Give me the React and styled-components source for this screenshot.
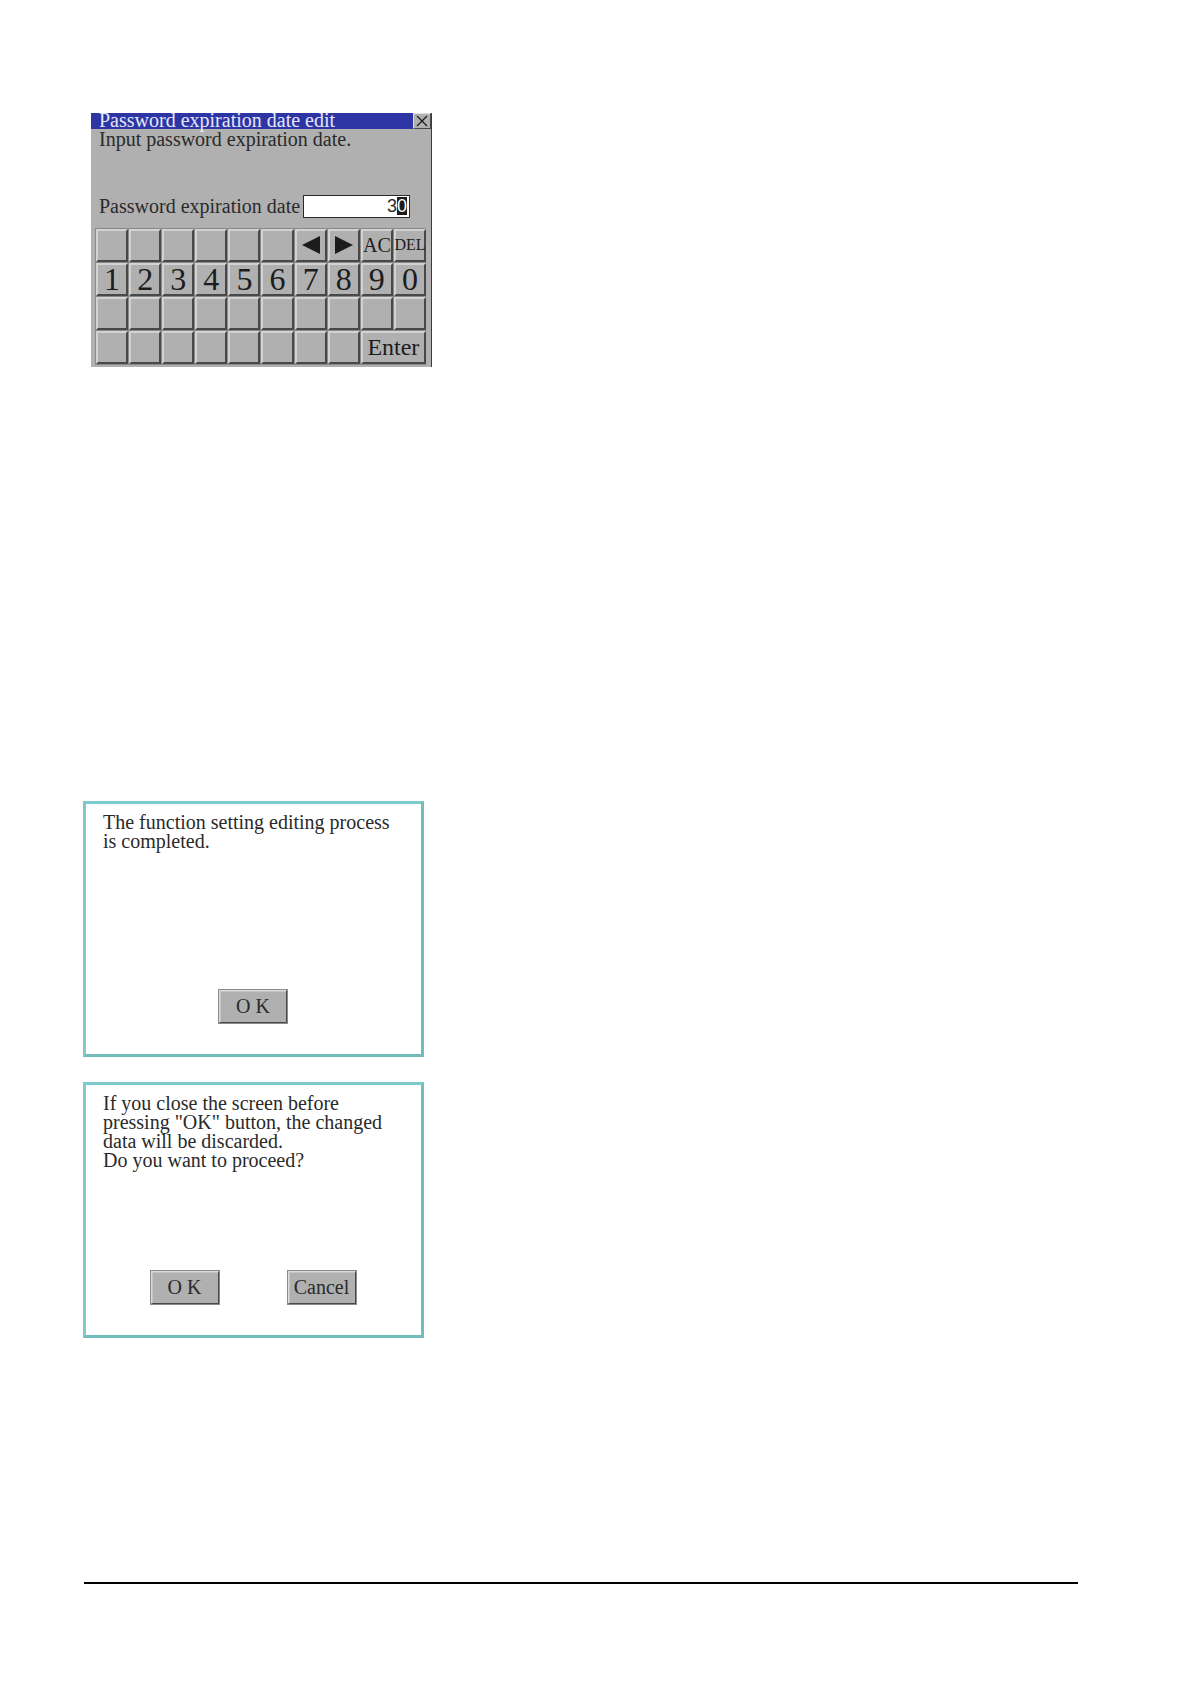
import { useState } from "react";
import styled, { createGlobalStyle } from "styled-components";

const GlobalStyle = createGlobalStyle`
  * {
    box-sizing: border-box;
  }

  body {
    margin: 0;
    background: #fff;
    color: #2a2a2a;
    font-family: "Liberation Serif", "Times New Roman", serif;
    font-size: 20px;
  }

  button,
  input {
    font: inherit;
    color: inherit;
    border-radius: 0;
  }
`;

const Page = styled.main`
  min-height: 100vh;
  padding: 113px 112px 100px 83px;
  display: flex;
  flex-direction: column;
`;

const Panel = styled.section`
  width: 341px;
  margin-left: 8px;
  margin-bottom: 434px;
  background: #b0b0b0;
  border-right: 1px solid #3c3c3c;
`;

const TitleBar = styled.header`
  display: flex;
  justify-content: space-between;
  height: 16px;
  background: #2d35a5;
`;

const Title = styled.h1`
  margin: 0;
  padding-left: 8px;
  font-size: 20px;
  font-weight: 400;
  line-height: 14px;
  color: #e4e6fa;
`;

const CloseButton = styled.button`
  display: flex;
  align-items: center;
  justify-content: center;
  width: 18px;
  height: 16px;
  padding: 0;
  background: #b0b0b0;
  border: 1px solid;
  border-color: #e0e0e0 #484848 #484848 #e0e0e0;
`;

const Hint = styled.p`
  margin: 0;
  padding-left: 8px;
  line-height: 20px;
`;

const Field = styled.div`
  display: flex;
  align-items: center;
  height: 24px;
  margin: 45px 21px 10px 8px;
`;

const FieldLabel = styled.label`
  flex: 0 0 204px;
  white-space: nowrap;
`;

const ValueBox = styled.div`
  flex: 1;
  min-width: 0;
  display: flex;
  align-items: center;
  height: 23px;
  padding-right: 2px;
  background: #fff;
  border: 1px solid #2a2a2a;
  font-family: "Liberation Sans", Arial, sans-serif;
  font-size: 18px;
  line-height: 18px;
`;

const ValueInput = styled.input`
  flex: 1;
  min-width: 0;
  padding: 0;
  border: 0;
  outline: 0;
  background: transparent;
  text-align: right;
`;

const Cursor = styled.span`
  background: #1c1c1c;
  color: #fff;
`;

const Keypad = styled.div`
  display: grid;
  grid-template-columns: repeat(10, 1fr);
  grid-auto-rows: 33px;
  gap: 1px;
  margin: 0 5px 0 4px;
  padding: 1px 0 1px 1px;
  background: #8a8a8a;
`;

const Key = styled.button`
  grid-column: span ${({ $span }) => $span || 1};
  display: flex;
  align-items: center;
  justify-content: center;
  min-width: 0;
  padding: 0 0 2px;
  background: #b0b0b0;
  border: 2px solid;
  border-color: #d2d2d2 #484848 #484848 #d2d2d2;
  color: #1c1c1c;
  font-size: ${({ $size }) => $size || 32}px;
  line-height: 26px;
`;

const PanelFoot = styled.div`
  height: 2px;
`;

const Dialog = styled.section`
  display: flex;
  flex-direction: column;
  justify-content: space-between;
  width: 341px;
  min-height: 256px;
  padding: 9px 9px 30px 17px;
  border: 3px solid #7ccaca;
  border-right-color: #74bcbc;
  border-bottom-color: #74bcbc;

  & + & {
    margin-top: 25px;
  }
`;

const Message = styled.p`
  margin: 0;
  line-height: 19px;
  white-space: pre-line;
`;

const Actions = styled.div`
  display: flex;
  justify-content: center;
  gap: 67px;
  padding-right: 9px;
`;

const ActionButton = styled.button`
  width: 70px;
  height: 35px;
  padding: 0;
  background: #b0b0b0;
  border: 2px solid;
  border-color: #dcdcdc #484848 #484848 #dcdcdc;
  box-shadow: inset 1px 1px #c4c4c4;
  outline: 1px solid #8a8a8a;
  outline-offset: -1px;
`;

const Rule = styled.hr`
  width: calc(100% - 1px);
  margin: auto 0 0 1px;
  border: 0;
  border-top: 2px solid #000;
`;

const Arrow = ({ left }) => (
  <svg width="18" height="18" viewBox="0 0 18 18" aria-hidden="true">
    <path d={left ? "M18 0v18L0 9z" : "M0 0v18l18-9z"} fill="#1c1c1c" />
  </svg>
);

const blanks = (row, count) =>
  Array.from({ length: count }, (_, i) => ({ id: `${row}-${i}` }));

const keys = [
  ...blanks("top", 6),
  { id: "left", label: "Move left", content: <Arrow left /> },
  { id: "right", label: "Move right", content: <Arrow /> },
  { id: "AC", content: "AC", size: 20 },
  { id: "DEL", content: "DEL", size: 16 },
  ..."1234567890".split("").map((digit) => ({ id: digit, content: digit })),
  ...blanks("middle", 10),
  ...blanks("bottom", 8),
  { id: "Enter", content: "Enter", size: 24, span: 2 },
];

const App = () => {
  const [value, setValue] = useState("3");

  return (
    <>
      <GlobalStyle />
      <Page>
        <Panel>
          <TitleBar>
            <Title>Password expiration date edit</Title>
            <CloseButton type="button" aria-label="Close">
              <svg width="12" height="12" viewBox="0 0 12 12">
                <path d="M1 1l10 10M11 1L1 11" stroke="#1c1c1c" strokeWidth="1.3" />
              </svg>
            </CloseButton>
          </TitleBar>
          <Hint>Input password expiration date.</Hint>
          <Field>
            <FieldLabel htmlFor="expiration">Password expiration date</FieldLabel>
            <ValueBox>
              <ValueInput
                id="expiration"
                inputMode="numeric"
                value={value}
                onChange={(e) => setValue(e.target.value)}
              />
              <Cursor>0</Cursor>
            </ValueBox>
          </Field>
          <Keypad>
            {keys.map(({ id, label, content, size, span }) => (
              <Key
                key={id}
                type="button"
                aria-label={label}
                $size={size}
                $span={span}
              >
                {content}
              </Key>
            ))}
          </Keypad>
          <PanelFoot />
        </Panel>

        <Dialog role="dialog" aria-label="Editing completed">
          <Message>{"The function setting editing process\nis completed."}</Message>
          <Actions>
            <ActionButton type="button">O K</ActionButton>
          </Actions>
        </Dialog>

        <Dialog role="dialog" aria-label="Discard changes">
          <Message>
            {
              'If you close the screen before\npressing "OK" button, the changed\ndata will be discarded.\nDo you want to proceed?'
            }
          </Message>
          <Actions>
            <ActionButton type="button">O K</ActionButton>
            <ActionButton type="button">Cancel</ActionButton>
          </Actions>
        </Dialog>

        <Rule />
      </Page>
    </>
  );
};

export default App;
